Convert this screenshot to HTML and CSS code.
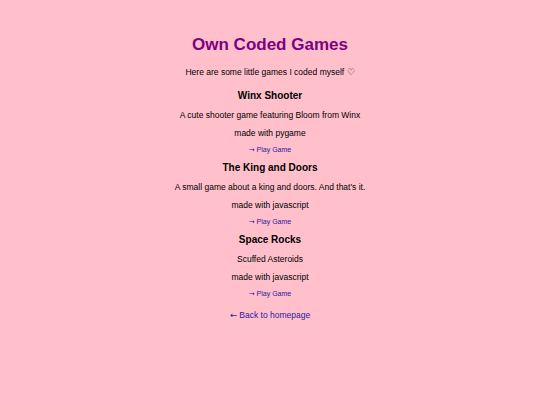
FILE: index.html
```html
<!DOCTYPE html>
<html>
<head>
<meta charset="utf-8">
<link rel="stylesheet" href="styles.css">
</head>
<body>
<main class="page">
  <h1 class="title">Own Coded Games</h1>
  <p class="intro">Here are some little games I coded myself ♡</p>
  <section class="game">
    <h2 class="game-name">Winx Shooter</h2>
    <p class="line">A cute shooter game featuring Bloom from Winx</p>
    <p class="line">made with pygame</p>
    <a class="play" href="#"><span class="arrow">→</span> Play Game</a>
  </section>
  <section class="game">
    <h2 class="game-name">The King and Doors</h2>
    <p class="line">A small game about a king and doors. And that's it.</p>
    <p class="line">made with javascript</p>
    <a class="play" href="#"><span class="arrow">→</span> Play Game</a>
  </section>
  <section class="game">
    <h2 class="game-name">Space Rocks</h2>
    <p class="line">Scuffed Asteroids</p>
    <p class="line">made with javascript</p>
    <a class="play" href="#"><span class="arrow">→</span> Play Game</a>
  </section>
  <a class="back" href="#"><span class="arrow">←</span> Back to homepage</a>
</main>
</body>
</html>
```
FILE: styles.css
```css
html, body {
  margin: 0;
  padding: 0;
  background: #ffc0cb;
}
body {
  font-family: "Liberation Sans", Arial, sans-serif;
  color: #000;
}
.page {
  display: flex;
  flex-direction: column;
  align-items: center;
  text-align: center;
  padding-top: 35px;
}
.title {
  margin: 0;
  font-size: 17px;
  line-height: 20px;
  color: #800080;
  font-weight: bold;
}
.intro {
  margin: 11px 0 0;
  font-size: 8.5px;
  line-height: 12px;
}
.game {
  display: flex;
  flex-direction: column;
  align-items: center;
  gap: 6px;
  margin-top: 11px;
}
.game + .game {
  margin-top: 6px;
}
.game-name {
  margin: 0;
  font-size: 10px;
  line-height: 14px;
  font-weight: bold;
}
.line {
  margin: 0;
  font-size: 8.5px;
  line-height: 12px;
}
.play {
  font-size: 7px;
  line-height: 10px;
  color: #2a1aa0;
  text-decoration: none;
}
.back {
  margin-top: 10px;
  font-size: 8.5px;
  line-height: 12px;
  color: #2a1aa0;
  text-decoration: none;
}
.arrow {
  font-family: "DejaVu Sans", sans-serif;
}
```
